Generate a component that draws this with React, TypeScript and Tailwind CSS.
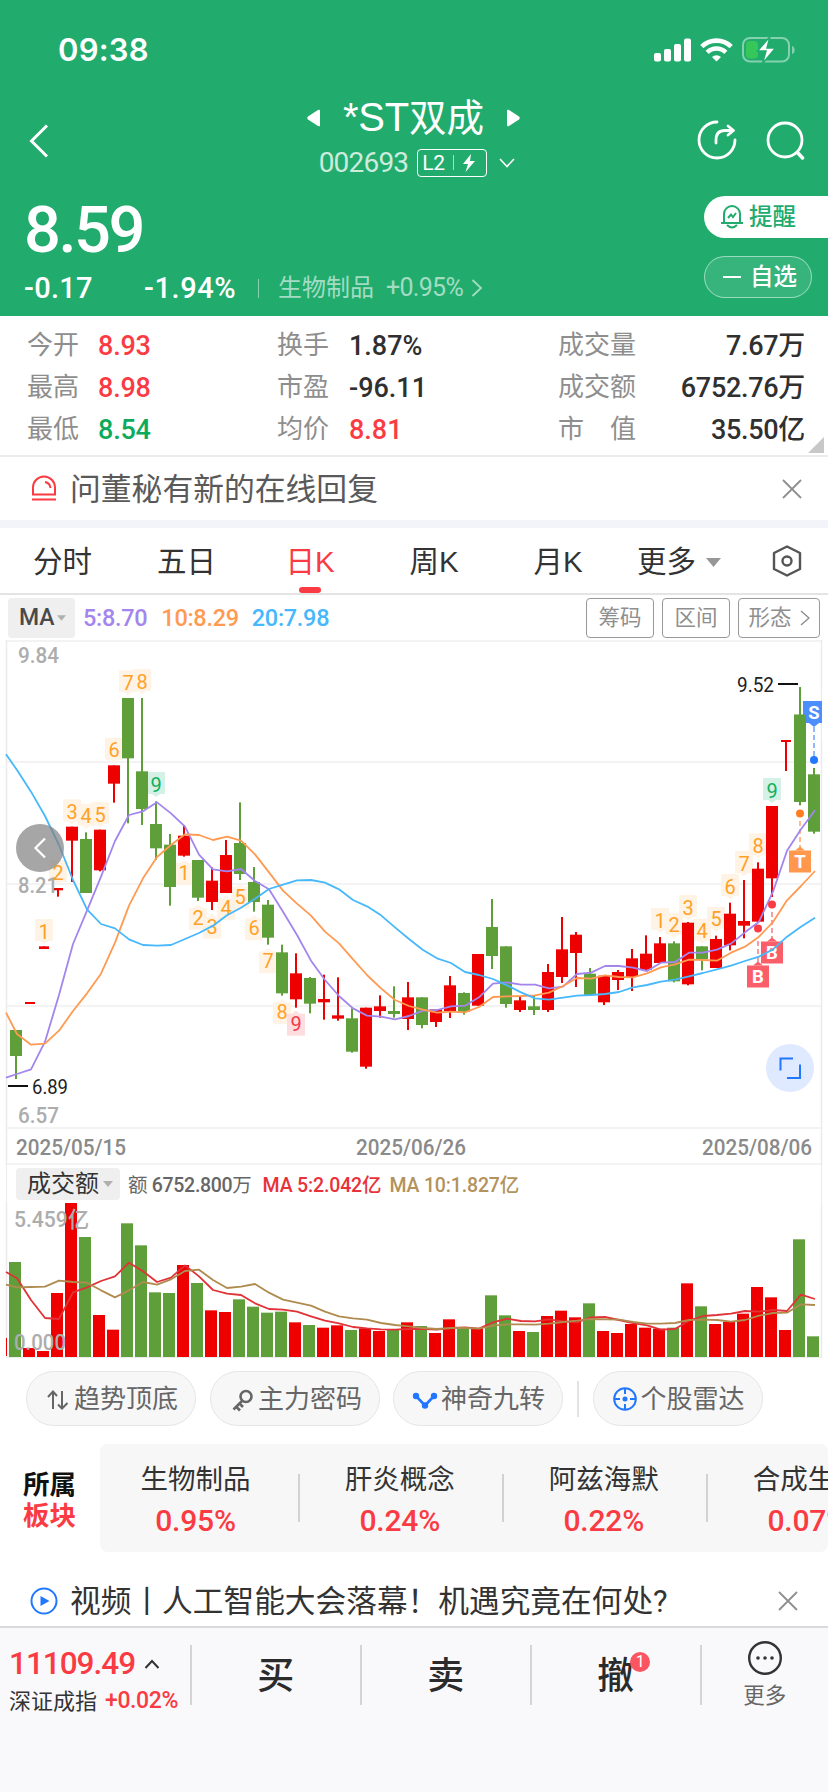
import type { ReactNode } from 'react'

type Candle = {
  up: boolean
  high: number
  top: number
  bottom: number
  low: number
  turnover: number
}

type Mark = {
  at: number
  y: number
  n: number
  tone?: 'green' | 'red'
}

const PITCH = 14
const UP = '#ee0000'
const DOWN = '#5e9f3a'
const FONT = "Roboto, 'Noto Sans CJK SC', sans-serif"

// colour, high, body top, body bottom, low, turnover top (thirds of a pixel)
const rows: [string, number, number, number, number, number][] = [
  ['g', 1170, 1170, 1248, 1317, 456],
  ['r', 1086, 1086, 1092, 1092, 714],
  ['r', 919, 919, 927, 927, 723],
  ['r', 744, 744, 751, 770, 549],
  ['r', 560, 560, 602, 726, 279],
  ['g', 577, 597, 759, 759, 381],
  ['r', 569, 569, 691, 694, 615],
  ['r', 376, 376, 431, 488, 659],
  ['g', 174, 174, 355, 550, 340],
  ['g', 174, 394, 507, 555, 406],
  ['g', 484, 552, 625, 660, 547],
  ['g', 582, 614, 741, 797, 549],
  ['r', 555, 587, 647, 650, 465],
  ['g', 660, 660, 773, 783, 519],
  ['r', 682, 722, 786, 810, 601],
  ['r', 600, 645, 759, 759, 606],
  ['g', 487, 609, 702, 720, 568],
  ['g', 681, 726, 786, 815, 590],
  ['g', 780, 794, 893, 914, 608],
  ['g', 914, 937, 1060, 1067, 605],
  ['r', 940, 1000, 1078, 1103, 637],
  ['g', 1011, 1014, 1091, 1120, 645],
  ['r', 1004, 1077, 1087, 1139, 653],
  ['r', 1012, 1126, 1136, 1142, 646],
  ['g', 1105, 1135, 1235, 1238, 660],
  ['r', 1103, 1103, 1280, 1286, 655],
  ['r', 1066, 1099, 1113, 1133, 663],
  ['g', 1039, 1113, 1122, 1133, 660],
  ['r', 1026, 1072, 1137, 1170, 637],
  ['g', 1072, 1072, 1155, 1165, 648],
  ['r', 1108, 1108, 1146, 1161, 669],
  ['r', 1008, 1036, 1113, 1134, 628],
  ['g', 1057, 1059, 1115, 1124, 657],
  ['r', 942, 942, 1097, 1097, 655],
  ['g', 777, 861, 948, 987, 556],
  ['g', 919, 919, 1092, 1103, 616],
  ['r', 1071, 1081, 1110, 1116, 663],
  ['g', 1065, 1099, 1110, 1125, 666],
  ['r', 972, 996, 1110, 1116, 618],
  ['r', 831, 928, 1011, 1029, 602],
  ['r', 876, 884, 939, 1041, 622],
  ['g', 984, 1001, 1065, 1065, 580],
  ['r', 1007, 1007, 1087, 1095, 663],
  ['r', 990, 996, 1020, 1050, 669],
  ['r', 927, 955, 1011, 1053, 642],
  ['r', 886, 941, 989, 993, 653],
  ['r', 891, 910, 969, 971, 656],
  ['g', 904, 910, 1024, 1027, 653],
  ['r', 846, 848, 1033, 1036, 520],
  ['g', 919, 919, 958, 991, 589],
  ['r', 887, 897, 984, 984, 642],
  ['r', 788, 821, 916, 931, 635],
  ['r', 720, 843, 857, 895, 611],
  ['r', 667, 686, 845, 845, 531],
  ['r', 498, 498, 715, 771, 562],
  ['r', 300, 300, 306, 393, 660],
  ['g', 141, 224, 486, 496, 388],
  ['g', 384, 403, 575, 581, 679],
]

const candles: Candle[] = rows.map(([c, high, top, bottom, low, turnover]) => ({
  up: c === 'r',
  high: high / 3,
  top: top / 3,
  bottom: bottom / 3,
  low: low / 3,
  turnover: turnover / 3,
}))

// the first value of each series sits on the left edge of the frame
const ma5 = [
  1313, 1302, 1288, 1205, 1065, 912, 812, 710, 603, 525, 514, 487, 520, 560, 644, 688, 694, 687, 723, 748, 815, 885,
  962, 1020, 1068, 1105, 1127, 1130, 1138, 1128, 1112, 1110, 1099, 1097, 1072, 1031, 1027, 1034, 1034, 1045, 1040,
  1002, 998, 978, 978, 983, 993, 968, 966, 938, 938, 929, 911, 877, 845, 755, 632, 568, 511,
]
const ma10 = [
  1118, 1182, 1214, 1211, 1172, 1113, 1060, 1001, 908, 797, 715, 651, 615, 583, 585, 600, 590, 602, 643, 697, 752,
  791, 827, 875, 910, 958, 1005, 1045, 1080, 1098, 1109, 1118, 1115, 1117, 1101, 1071, 1069, 1068, 1066, 1058, 1038,
  1014, 1016, 1006, 1011, 1012, 1000, 982, 973, 959, 960, 962, 938, 920, 890, 846, 781, 738, 693,
]
const ma20 = [
  343, 390, 455, 528, 615, 720, 808, 852, 865, 898, 915, 917, 915, 897, 879, 857, 826, 803, 776, 747, 734, 721, 720,
  728, 748, 780, 799, 826, 862, 897, 930, 955, 969, 996, 1005, 1017, 1036, 1057, 1075, 1079, 1073, 1067, 1065, 1062,
  1056, 1042, 1035, 1025, 1019, 1009, 999, 988, 977, 963, 950, 928, 890, 860, 833,
]
const turnoverMa5 = [
  486, 505, 570, 624, 627, 547, 532, 513, 499, 458, 484, 516, 503, 466, 499, 540, 551, 555, 580, 597, 599, 605, 619,
  632, 640, 651, 655, 658, 659, 657, 657, 659, 654, 652, 656, 637, 626, 633, 634, 628, 634, 637, 622, 621, 630, 639,
  646, 659, 657, 632, 618, 615, 611, 603, 605, 600, 603, 554, 567,
]
const turnoverMa10 = [
  524, 532, 531, 530, 512, 516, 518, 541, 562, 541, 516, 524, 508, 483, 479, 510, 534, 530, 522, 548, 569, 578, 587,
  605, 619, 625, 629, 639, 645, 649, 654, 657, 654, 654, 656, 647, 643, 643, 644, 641, 636, 632, 627, 628, 629, 636,
  641, 641, 639, 630, 629, 630, 635, 630, 617, 609, 608, 583, 585,
]

const marks: Mark[] = [
  { at: 2, y: 837, n: 1 },
  { at: 3, y: 660, n: 2 },
  { at: 4, y: 478, n: 3 },
  { at: 5, y: 491, n: 4 },
  { at: 6, y: 486, n: 5 },
  { at: 7, y: 293, n: 6 },
  { at: 8, y: 91, n: 7 },
  { at: 9, y: 87, n: 8 },
  { at: 10, y: 396, n: 9, tone: 'green' },
  { at: 12, y: 669, n: 1 },
  { at: 13, y: 803, n: 2 },
  { at: 14, y: 830, n: 3 },
  { at: 15, y: 775, n: 4 },
  { at: 16, y: 740, n: 5 },
  { at: 17, y: 835, n: 6 },
  { at: 18, y: 934, n: 7 },
  { at: 19, y: 1087, n: 8 },
  { at: 20, y: 1121, n: 9, tone: 'red' },
  { at: 46, y: 804, n: 1 },
  { at: 47, y: 818, n: 2 },
  { at: 48, y: 765, n: 3 },
  { at: 49, y: 836, n: 4 },
  { at: 50, y: 800, n: 5 },
  { at: 51, y: 702, n: 6 },
  { at: 52, y: 633, n: 7 },
  { at: 53, y: 580, n: 8 },
  { at: 54, y: 414, n: 9, tone: 'green' },
]

const stats = [
  ['今开', '8.93', '换手', '1.87%', '成交量', '7.67万'],
  ['最高', '8.98', '市盈', '-96.11', '成交额', '6752.76万'],
  ['最低', '8.54', '均价', '8.81', '市　值', '35.50亿'],
]

const sectors = [
  { name: '生物制品', change: '0.95%' },
  { name: '肝炎概念', change: '0.24%' },
  { name: '阿兹海默', change: '0.22%' },
  { name: '合成生物', change: '0.07%' },
]

function linePoints(values: number[], offset: number) {
  return values.map((v, i) => `${i === 0 ? 6 : offset + PITCH * (i - 1)},${v / 3}`).join(' ')
}

function markColors(tone?: 'green' | 'red') {
  if (tone === 'green') return ['#d5f0e4', '#12b060']
  if (tone === 'red') return ['#fedddf', '#f5394a']
  return ['#fff3e6', '#ffa126']
}

function Label(props: { x: number; y: number; w: number; size: number; fill: string; children: ReactNode }) {
  return (
    <text
      x={props.x}
      y={props.y}
      textLength={props.w}
      lengthAdjust="spacingAndGlyphs"
      fontSize={props.size}
      fill={props.fill}
    >
      {props.children}
    </text>
  )
}

function Caret({ className }: { className: string }) {
  return (
    <svg viewBox="0 0 10 6" className={className}>
      <path d="M0 0h10L5 6z" fill="currentColor" />
    </svg>
  )
}

function Cross() {
  return (
    <svg viewBox="0 0 20 20" className="size-5 text-[#8f8f8f]" fill="none" stroke="currentColor" strokeWidth="1.8">
      <path d="M1 1l18 18M19 1L1 19" />
    </svg>
  )
}

function StatusBar() {
  return (
    <div className="flex h-[98px] items-center justify-between pt-[2px] pr-[32px] pl-[58px]">
      <span className="font-[Inter] text-[31px] font-semibold tracking-[0.2px]">09:38</span>
      <div className="flex items-center gap-[8px]">
        <svg width="38" height="24" fill="currentColor">
          <rect x="0" y="15" width="7" height="8.5" rx="2" />
          <rect x="10" y="11" width="7" height="12.5" rx="2" />
          <rect x="20" y="6" width="7" height="17.5" rx="2" />
          <rect x="30" y="0.5" width="7" height="23" rx="2" />
        </svg>
        <svg width="33" height="24" fill="none" stroke="currentColor" strokeWidth="4.6">
          <path d="M1.8 8.6a21 21 0 0 1 29.4 0" />
          <path d="M7.2 14.4a13.2 13.2 0 0 1 18.6 0" />
          <path d="M16.5 23.5l-4.500-4.500a6.500 6.500 0 0 1 9 0z" fill="currentColor" stroke="none" />
        </svg>
        <svg width="54" height="28" className="ml-[1px]">
          <rect x="1" y="2" width="46" height="23.500" rx="7" fill="none" stroke="#fff" strokeOpacity=".45" strokeWidth="2" />
          <path d="M50 10c3.500 1 3.500 7 0 8z" fill="#fff" fillOpacity=".45" />
          <rect x="4" y="5" width="12" height="17.500" rx="4" fill="#35c759" />
          <path d="M28 .5L15.500 15h8.500l-3.500 12.500L33.500 12h-8.500z" fill="#fff" stroke="#21ac6e" strokeWidth="1.500" />
        </svg>
      </div>
    </div>
  )
}

function Header() {
  return (
    <header className="h-[316px] bg-[#21ac6e] text-white">
      <StatusBar />
      <div className="flex h-[90px] items-center">
        <div className="flex w-[240px] pl-[28px]">
          <svg width="22" height="36" fill="none" stroke="currentColor" strokeWidth="3" className="mt-[-4px]">
            <path d="M19 2.500L3.500 18 19 33.500" />
          </svg>
        </div>
        <div className="flex w-[348px] flex-col items-center pb-[12px]">
          <div className="flex h-[42px] items-center gap-[23px]">
            <svg width="13" height="18" fill="currentColor" className="-ml-[1px]">
              <path d="M13 2v14c0 1.500-1 1.500-2 1L1 10.500q-1.500-1.500 0-3L11 1c1-.6 2-.4 2 1z" />
            </svg>
            <span className="flex items-baseline font-['Liberation_Sans','Noto_Sans_CJK_SC',sans-serif] leading-[42px]">
              <span className="text-[40px] tracking-[-0.200px]">*ST</span>
              <span className="text-[37.500px]">双成</span>
            </span>
            <svg width="13" height="18" fill="currentColor">
              <path d="M0 2v14c0 1.500 1 1.500 2 1l10-6.500q1.500-1.500 0-3L2 1C1 .4 0 .6 0 2z" />
            </svg>
          </div>
          <div className="mt-[9px] flex h-[30px] items-center pl-[6px]">
            <span className="text-[28px] leading-[30px] tracking-[-0.8px] text-[#cdebdc]">002693</span>
            <span className="ml-[9px] flex h-[28px] w-[70px] items-center rounded-[4px] border-[1.500px] border-white pl-[4px]">
              <span className="text-[21px] leading-[24px] tracking-[-0.3px]">L2</span>
              <span className="mx-[8px] h-[15px] w-px bg-white/60" />
              <svg width="14" height="18" fill="currentColor">
                <path d="M9 0L1 10h5l-2.500 8L13 7H8z" />
              </svg>
            </span>
            <svg width="16" height="10" fill="none" stroke="currentColor" strokeWidth="1.600" className="ml-[12px]">
              <path d="M1 1l7 7.500L15 1" />
            </svg>
          </div>
        </div>
        <div className="flex w-[240px] justify-end gap-[28px] pr-[23px]">
          <svg width="40" height="40" fill="none" stroke="currentColor" strokeWidth="2.800" className="-mt-[6px]">
            <path d="M20 2A18 18 0 1 0 38 20" strokeLinecap="round" />
            <path d="M19 23v-3q0-9.500 9-9.500h7M31 6l5.500 4.500-5.500 4.500" strokeLinejoin="round" strokeLinecap="round" />
          </svg>
          <svg width="40" height="40" fill="none" stroke="currentColor" strokeWidth="2.800" className="-mt-[6px]">
            <circle cx="20" cy="20" r="17" />
            <path d="M32.500 32.500l5 5.500" strokeWidth="3.500" strokeLinecap="round" />
          </svg>
        </div>
      </div>
      <div className="flex justify-between">
        <div className="pl-[24px]">
          <div className="mt-[9px] h-[66px] text-[65px] leading-[66px] font-medium tracking-[-2.500px]">8.59</div>
          <div className="mt-[10px] flex h-[30px] items-center leading-[30px]">
            <span className="w-[120px] text-[29px] font-medium tracking-[0.3px]">-0.17</span>
            <span className="w-[114px] text-[29px] font-medium tracking-[0.6px]">-1.94%</span>
            <span className="h-[19px] w-px bg-white/45" />
            <span className="ml-[19px] text-[24px] text-[#a3dcc2]">生物制品</span>
            <span className="ml-[12px] text-[25px] tracking-[-0.700px] text-[#a3dcc2]">+0.95%</span>
            <svg width="12" height="18" fill="none" stroke="#a3dcc2" strokeWidth="1.800" className="ml-[8px]">
              <path d="M1.500 1L10 9l-8.500 8" />
            </svg>
          </div>
        </div>
        <div className="flex w-[124px] flex-col pt-[8px]">
          <div className="flex h-[42px] items-center rounded-l-full bg-white pl-[16px] text-[#21ac6e]">
            <svg width="24" height="25" fill="none" stroke="currentColor" strokeWidth="2" className="-mt-[2px]">
              <path d="M4 18.500V10a8 8 0 0 1 16 0v8.500M1 19h22M7 21q5 5 10 0" />
              <path d="M8 14l3-3.500 2 2.500 3-4" />
            </svg>
            <span className="ml-[5px] pt-[2px] text-[23.500px] font-medium">提醒</span>
          </div>
          <div className="mt-[18px] mr-[16px] flex h-[42px] items-center rounded-full border border-white/50 bg-white/10 pl-[18px]">
            <span className="h-[2.500px] w-[18px] bg-white" />
            <span className="ml-[9px] pt-[2px] text-[23.500px] font-medium">自选</span>
          </div>
        </div>
      </div>
    </header>
  )
}

function statColor(row: number, col: number) {
  if (col === 1) return row === 2 ? 'text-[#0bab5b]' : 'text-[#fa3b43]'
  return row === 2 ? 'text-[#fa3b43]' : 'text-[#303030]'
}

function Stats() {
  return (
    <section className="relative h-[141px] border-b-2 border-[#ebebeb] pt-[8px]">
      {stats.map((row, i) => (
        <div key={row[0]} className="flex h-[42px] items-center pr-[23px] pl-[27px] text-[26px] leading-[42px]">
          <span className="w-[71px] text-[#8e8e8e]">{row[0]}</span>
          <span className={`w-[179px] pt-[2px] text-[27px] font-medium tracking-[-0.2px] ${statColor(i, 1)}`}>{row[1]}</span>
          <span className="w-[72px] text-[#8e8e8e]">{row[2]}</span>
          <span className={`w-[209px] pt-[2px] text-[27px] font-medium ${statColor(i, 3)}`}>{row[3]}</span>
          <span className="text-[#8e8e8e]">{row[4]}</span>
          <span className="ml-auto pt-[2px] text-[27px] font-medium tracking-[-0.300px] text-[#303030]">{row[5]}</span>
        </div>
      ))}
      <svg width="16" height="16" className="absolute right-[4px] bottom-[2px]">
        <path d="M16 0v16H0z" fill="#c8c8c8" />
      </svg>
    </section>
  )
}

function Tabs() {
  return (
    <nav className="flex h-[67px] items-center border-b-2 border-[#e4e4e4] pt-[3px] font-['Liberation_Sans','Noto_Sans_CJK_SC',sans-serif] text-[29.500px] text-[#333]">
      <span className="w-[124px] pl-[33px]">分时</span>
      <span className="w-[124px] pl-[33px]">五日</span>
      <span className="relative flex h-full w-[124px] items-center justify-center text-[#fa3b43]">
        <span>日K</span>
        <i className="absolute bottom-0 h-[6px] w-[22px] rounded-[3px] bg-[#fa3b43]" />
      </span>
      <span className="w-[124px] text-center">周K</span>
      <span className="w-[124px] text-center">月K</span>
      <span className="flex items-center pl-[17px]">
        更多
        <Caret className="ml-[10px] h-[9px] w-[15px] text-[#979797]" />
      </span>
      <svg width="32" height="32" fill="none" stroke="#555" strokeWidth="2.400" className="-mt-[2px] mr-[25px] ml-auto">
        <path d="M16 1.500l13 6.500v16l-13 6.500L3 24V8z" strokeLinejoin="round" />
        <circle cx="16" cy="16" r="4.500" />
      </svg>
    </nav>
  )
}

function Indicators() {
  return (
    <div className="flex h-[45px] items-center pr-[8px] pl-[8px] text-[24px]">
      <span className="flex h-[40px] w-[67px] items-center rounded-[4px] bg-[#efefef] pl-[11px] font-medium text-[#4a4a4a]">
        <span className="pt-[2px] text-[23px]">MA</span>
        <Caret className="ml-[2px] h-[6px] w-[9px] text-[#b0b0b0]" />
      </span>
      <span className="ml-[8px] pt-[3px] text-[23.500px] font-medium tracking-[-0.300px] text-[#a385ee]">5:8.70</span>
      <span className="ml-[14px] pt-[3px] text-[23.500px] font-medium tracking-[-0.300px] text-[#ff9a52]">10:8.29</span>
      <span className="ml-[13px] pt-[3px] text-[23.500px] font-medium tracking-[-0.300px] text-[#46b8fb]">20:7.98</span>
      <div className="ml-auto flex gap-[8px] text-[21.500px] text-[#8f8f8f]">
        <span className="flex h-[40px] w-[68px] items-center justify-center rounded-[4px] border-[1.500px] border-[#999] pt-[1px]">筹码</span>
        <span className="flex h-[40px] w-[68px] items-center justify-center rounded-[4px] border-[1.500px] border-[#999] pt-[1px]">区间</span>
        <span className="flex h-[40px] w-[82px] items-center justify-center gap-[8px] rounded-[4px] border-[1.500px] border-[#999] pt-[1px]">
          形态
          <svg width="10" height="16" fill="none" stroke="currentColor" strokeWidth="1.500">
            <path d="M1 1l8 7-8 7" />
          </svg>
        </span>
      </div>
    </div>
  )
}

function TradeTag({ x, y, letter, fill, flip }: { x: number; y: number; letter: string; fill: string; flip?: boolean }) {
  return (
    <g>
      <rect x={x - 11} y={y} width="22" height="22" fill={fill} />
      <path d={flip ? `M${x - 5} ${y + 22}l5 4 5-4z` : `M${x - 5} ${y}l5-4 5 4z`} fill={fill} />
      <text x={x} y={y + 17.500} fontSize="18.500" fontWeight="700" fill="#fff" textAnchor="middle">
        {letter}
      </text>
    </g>
  )
}

function PriceChart() {
  return (
    <svg width="828" height="525" fontFamily={FONT} className="block">
      <g stroke="#f3f3f3" strokeWidth="2">
        {[1, 122, 244, 366, 488, 524].map((y) => (
          <path key={y} d={`M6 ${y}H822`} />
        ))}
        <path d="M6.500 0V525M821.500 0V525" stroke="#ebebeb" strokeWidth="1.500" />
      </g>
      {marks.map((m) => {
        const [bg, fg] = markColors(m.tone)
        const x = 16 + PITCH * m.at
        const y = m.y / 3
        const below = m.at >= 12 && m.at <= 20
        return (
          <g key={m.at}>
            <rect x={x - 9} y={y} width="18" height="22" rx="1" fill={bg} />
            <path d={below ? `M${x - 4} ${y}l4-3 4 3z` : `M${x - 4} ${y + 22}l4 3 4-3z`} fill={bg} />
            <text x={x} y={below ? y + 17 : y + 19.700} fontSize="20" fill={fg} textAnchor="middle">
              {m.n}
            </text>
          </g>
        )
      })}
      {candles.map((c, i) => {
        const x = 16 + PITCH * i
        const half = c.bottom - c.top < 3 ? 5 : 6
        return (
          <g key={i} fill={c.up ? UP : DOWN}>
            <rect x={x - 1} y={c.high} width="2" height={c.low - c.high} />
            <rect x={x - half} y={c.top} width={half * 2} height={c.bottom - c.top} />
          </g>
        )
      })}
      <g fontWeight="500">
        <Label x={18} y={23} w={41} size={22} fill="#adadad">9.84</Label>
        <Label x={18} y={252.500} w={40} size={22} fill="#adadad">8.21</Label>
        <Label x={18} y={483} w={41} size={22} fill="#adadad">6.57</Label>
      </g>
      <g strokeDasharray="5 3" strokeWidth="2">
        <path d="M814 87V118" stroke="#8fb8ff" />
        <path d="M800 181V208" stroke="#ffb98a" />
        <path d="M772 272V300" stroke="#fb9aa2" />
        <path d="M758 301V325" stroke="#fb9aa2" />
      </g>
      <TradeTag x={814} y={61} letter="S" fill="#4d8efd" flip />
      <TradeTag x={800} y={210.500} letter="T" fill="#ff974d" />
      <TradeTag x={772} y={301.500} letter="B" fill="#fa5f69" />
      <TradeTag x={758} y={325.500} letter="B" fill="#fa5f69" />
      {/* last candle but one stays in front of the sell tag */}
      <rect x="794" y="74.700" width="12" height="87.300" fill={DOWN} />
      <g fill="none" strokeWidth="1.800" strokeLinejoin="round">
        <polyline points={linePoints(ma5, 17)} stroke="#a385ee" />
        <polyline points={linePoints(ma10, 17)} stroke="#ff9a52" />
        <polyline points={linePoints(ma20, 17)} stroke="#46b8fb" />
      </g>
      <rect x="822" y="50" width="6" height="50" fill="#fff" />
      <circle cx="814" cy="120" r="4" fill="#2277ff" />
      <circle cx="800" cy="173.500" r="4" fill="#ff7d20" />
      <circle cx="772" cy="264.500" r="4" fill="#fa3b43" />
      <circle cx="758" cy="288.500" r="4" fill="#fa3b43" />
      <path d="M778 44h20M8 446h20" stroke="#111" strokeWidth="2" />
      <Label x={737} y={52} w={37} size={20} fill="#222">9.52</Label>
      <Label x={32} y={453.500} w={36} size={20} fill="#222">6.89</Label>
      <circle cx="40" cy="208" r="24" fill="#808080" fillOpacity=".7" />
      <path d="M45 198.500L35.500 208l9.500 9.500" fill="none" stroke="#fff" strokeWidth="2.200" />
      <circle cx="790" cy="428" r="24" fill="#dfe9ff" />
      <path d="M780.500 430.500V418.500H793M800 424.500V438H787" fill="none" stroke="#2277ff" strokeWidth="2" />
      <g fontWeight="500">
        <Label x={16} y={515} w={110} size={22.500} fill="#8a8a8a">2025/05/15</Label>
        <Label x={356} y={515} w={110} size={22.500} fill="#8a8a8a">2025/06/26</Label>
        <Label x={702} y={515} w={110} size={22.500} fill="#8a8a8a">2025/08/06</Label>
      </g>
    </svg>
  )
}

function TurnoverChart() {
  return (
    <>
      <div className="mr-[6px] ml-[6px] flex h-[37px] items-center border-x border-[#ebebeb] pl-[9px] text-[19.500px] font-medium">
        <span className="flex h-[32px] w-[104px] items-center rounded-[4px] bg-[#efefef] pl-[11px] text-[24px] font-normal text-[#333]">
          成交额
          <Caret className="ml-[4px] h-[6px] w-[10px] text-[#b0b0b0]" />
        </span>
        <span className="ml-[8px] pt-[4px] tracking-[-0.300px] text-[#666]">
          <span className="font-normal">额</span> 6752.800<span className="font-normal">万</span>
        </span>
        <span className="ml-[11px] pt-[4px] tracking-[-0.150px] text-[#e8323a]">MA 5:2.042亿</span>
        <span className="ml-[8px] pt-[4px] tracking-[-0.150px] text-[#b3925c]">MA 10:1.827亿</span>
      </div>
      <svg width="828" height="156" viewBox="0 92 828 156" fontFamily={FONT} className="block">
        <path d="M6.500 92V247.500H821.500V92" fill="none" stroke="#ebebeb" strokeWidth="1.500" />
        <rect x="6" y="228" width="1" height="18" fill={UP} />
        {candles.map((c, i) => (
          <rect
            key={i}
            x={9 + PITCH * i}
            y={c.turnover}
            width="12"
            height={247 - c.turnover}
            fill={c.up ? UP : DOWN}
          />
        ))}
        <g fill="none" strokeWidth="1.800" strokeLinejoin="round">
          <polyline points={linePoints(turnoverMa5, 17)} stroke="#e03237" />
          <polyline points={linePoints(turnoverMa10, 17)} stroke="#b08b4f" />
        </g>
        <g fontWeight="500">
          <Label x={14} y={117} w={75} size={21.500} fill="#adadad">5.459亿</Label>
          <Label x={14} y={239.500} w={52} size={21.500} fill="#adadad">0.000</Label>
        </g>
      </svg>
    </>
  )
}

function Pill({ icon, children }: { icon: ReactNode; children: ReactNode }) {
  return (
    <span className="flex h-[55px] w-[170px] items-center rounded-full border-[1.500px] border-[#e6e6e6] bg-[#f7f7f7] pl-[18px] text-[26px] text-[#666]">
      <svg width="26" height="26" fill="none" stroke="currentColor" strokeWidth="2" className="mr-[3px] shrink-0">
        {icon}
      </svg>
      <span className="pt-[2px] whitespace-nowrap">{children}</span>
    </span>
  )
}

function Tools() {
  return (
    <div className="flex items-center pt-[13px] pl-[26px]">
      <Pill icon={<path d="M8 23V6M3 11l5-5.500 4 4.500M17 5v17.500M13 18.500l4 4 5.500-5.500" />}>趋势顶底</Pill>
      <span className="w-[14px]" />
      <Pill
        icon={
          <g strokeWidth="2.600">
            <circle cx="17" cy="10.500" r="5.500" />
            <path d="M13 15L4.500 23.500M7 20.500l4 4M10.500 17.500l3.500 3.500" />
          </g>
        }
      >
        主力密码
      </Pill>
      <span className="w-[13px]" />
      <Pill
        icon={
          <g stroke="#2277ff" fill="#2277ff">
            <path d="M4 10l9 9.500 9-9.500" fill="none" strokeWidth="2.600" />
            <circle cx="4" cy="10" r="2.200" />
            <circle cx="13" cy="19.500" r="2.200" />
            <circle cx="22" cy="10" r="2.200" />
          </g>
        }
      >
        神奇九转
      </Pill>
      <span className="mx-[14px] h-[36px] w-[1.500px] bg-[#e2e2e2]" />
      <Pill
        icon={
          <g stroke="#2277ff">
            <circle cx="13" cy="13" r="10.800" />
            <path d="M13 2v6M13 18v6M2 13h6M18 13h6" />
            <circle cx="13" cy="13" r="1.500" fill="#2277ff" />
          </g>
        }
      >
        个股雷达
      </Pill>
    </div>
  )
}

function Sectors() {
  return (
    <section className="mt-[18px] flex h-[108px] overflow-hidden">
      <div className="flex w-[100px] shrink-0 flex-col justify-center pt-[3px] pl-[23px] text-[26.500px] leading-[31px] font-bold">
        <span className="text-[#111]">所属</span>
        <span className="text-[#fa3b43]">板块</span>
      </div>
      <div className="flex w-[728px] overflow-hidden rounded-[8px] bg-[#f7f7f7]">
        {sectors.map((s, i) => (
          <div key={s.name} className="flex shrink-0 items-center">
            {i > 0 && <i className="h-[48px] w-[1.500px] bg-[#d2d2d2]" />}
            <div className={`flex flex-col items-center pt-[4px] ${i === 0 ? 'w-[198px] pr-[7px]' : 'w-[202.500px] pr-[2px]'}`}>
              <span className="h-[41px] text-[27.500px] leading-[36px] text-[#333]">{s.name}</span>
              <span className="h-[36px] text-[30px] leading-[36px] font-medium tracking-[-0.200px] text-[#fa3b43]">{s.change}</span>
            </div>
          </div>
        ))}
      </div>
    </section>
  )
}

function BottomBar() {
  return (
    <footer className="flex h-[166px] border-t-2 border-[#dadadc] bg-[#f9f9fc]">
      <div className="w-[190px] pt-[17px] pl-[9px]">
        <div className="flex h-[38px] items-center text-[31.500px] leading-[38px] font-medium tracking-[-1px] text-[#fa3b43]">
          11109.49
          <svg width="16" height="10" fill="none" stroke="#333" strokeWidth="2" className="ml-[9px]">
            <path d="M1.500 9L8 2l6.500 7" />
          </svg>
        </div>
        <div className="mt-[3px] flex h-[30px] items-center text-[22px] text-[#333]">
          深证成指
          <span className="ml-[8px] text-[23px] font-medium tracking-[-0.400px] text-[#fa3b43]">+0.02%</span>
        </div>
      </div>
      {['买', '卖', '撤'].map((label) => (
        <div key={label} className="flex h-[96px] w-[170px] items-center">
          <i className="mt-[-2px] h-[60px] w-[1.500px] bg-[#d4d4d6]" />
          <span className="relative mx-auto pt-[2px] text-[37px] font-medium text-[#2b2b2b]">
            {label}
            {label === '撤' && (
              <b className="absolute top-[5px] left-[33px] flex size-[20px] items-center justify-center rounded-full bg-[#fa5560] text-[16px] font-normal text-white">
                1
              </b>
            )}
          </span>
        </div>
      ))}
      <div className="flex h-[96px] flex-1 items-center">
        <i className="mt-[-2px] h-[60px] w-[1.500px] bg-[#d4d4d6]" />
        <div className="flex flex-1 flex-col items-center">
          <svg width="36" height="36" fill="none" stroke="#333" strokeWidth="2.400">
            <circle cx="18" cy="18" r="15.800" />
            <g fill="#333" stroke="none">
              <circle cx="11" cy="18" r="1.800" />
              <circle cx="18" cy="18" r="1.800" />
              <circle cx="25" cy="18" r="1.800" />
            </g>
          </svg>
          <span className="mt-[4px] text-[21.500px] leading-[32px] text-[#666]">更多</span>
        </div>
      </div>
    </footer>
  )
}

export default function App() {
  return (
    <main className="flex h-[1792px] w-[828px] flex-col overflow-hidden bg-white font-[Roboto,'Noto_Sans_CJK_SC',sans-serif]">
      <Header />
      <Stats />
      <div className="flex h-[63px] items-center pr-[26px] pl-[31px]">
        <svg width="26" height="26" fill="none" stroke="#fa3b43" strokeWidth="2" className="mt-[-2px]">
          <path d="M2 19.500V12.500a11 11 0 0 1 22 0v7zM1 24.500h24M14 7q5 1 5.500 6" />
        </svg>
        <span className="ml-[13px] pt-[3px] text-[30.800px] text-[#595959]">问董秘有新的在线回复</span>
        <span className="ml-auto">
          <Cross />
        </span>
      </div>
      <div className="h-[8px] bg-[#f2f4f9]" />
      <Tabs />
      <Indicators />
      <PriceChart />
      <TurnoverChart />
      <Tools />
      <Sectors />
      <div className="mt-[24px] flex h-[50px] items-center pr-[30px] pl-[30px]">
        <svg width="28" height="28" fill="none" stroke="#2277ff" strokeWidth="2">
          <circle cx="14" cy="14" r="12.500" />
          <path d="M10.500 9l9 5-9 5z" fill="#2277ff" stroke="none" />
        </svg>
        <span className="ml-[12px] pt-[3px] text-[30.700px] whitespace-nowrap text-[#333]">视频丨人工智能大会落幕！机遇究竟在何处?</span>
        <span className="ml-auto">
          <Cross />
        </span>
      </div>
      <BottomBar />
    </main>
  )
}
